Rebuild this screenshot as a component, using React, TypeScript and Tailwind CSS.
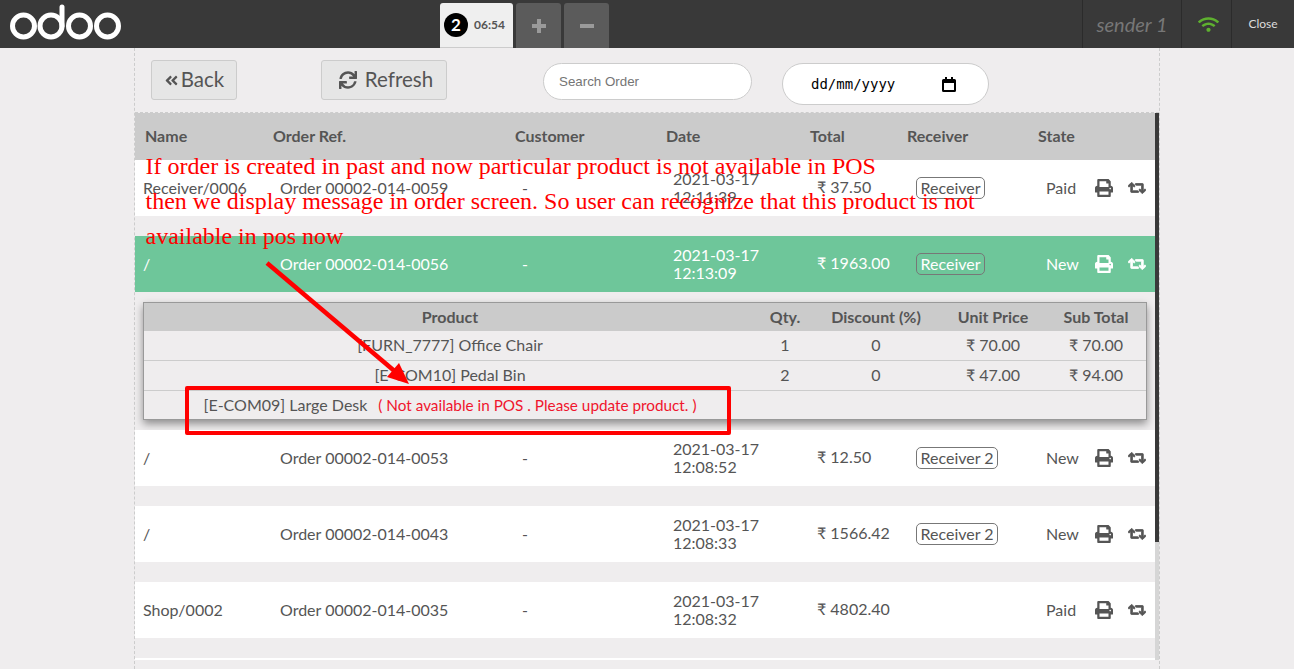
import { FaAngleDoubleLeft, FaPrint, FaRetweet, FaSync, FaWifi } from 'react-icons/fa';

type Order = {
  name: string;
  ref: string;
  date: string;
  time: string;
  total: string;
  receiver?: string;
  state: string;
  active?: boolean;
};

const orders: Order[] = [
  { name: 'Receiver/0006', ref: 'Order 00002-014-0059', date: '2021-03-17', time: '12:11:39', total: '₹ 37.50', receiver: 'Receiver', state: 'Paid' },
  { name: '/', ref: 'Order 00002-014-0056', date: '2021-03-17', time: '12:13:09', total: '₹ 1963.00', receiver: 'Receiver', state: 'New', active: true },
  { name: '/', ref: 'Order 00002-014-0053', date: '2021-03-17', time: '12:08:52', total: '₹ 12.50', receiver: 'Receiver 2', state: 'New' },
  { name: '/', ref: 'Order 00002-014-0043', date: '2021-03-17', time: '12:08:33', total: '₹ 1566.42', receiver: 'Receiver 2', state: 'New' },
  { name: 'Shop/0002', ref: 'Order 00002-014-0035', date: '2021-03-17', time: '12:08:32', total: '₹ 4802.40', state: 'Paid' },
];

const lines = [
  { product: '[FURN_7777] Office Chair', qty: '1', discount: '0', price: '₹ 70.00', sub: '₹ 70.00' },
  { product: '[E-COM10] Pedal Bin', qty: '2', discount: '0', price: '₹ 47.00', sub: '₹ 94.00' },
];

function Logo() {
  return (
    <svg width="113" height="38" viewBox="0 0 113 38" className="ml-[9px] mt-[4px] shrink-0" fill="none" stroke="#fff" strokeWidth="5">
      <circle cx="14.5" cy="22" r="11" />
      <circle cx="42" cy="22" r="11" />
      <path d="M53 22V3" strokeLinecap="round" />
      <circle cx="70.5" cy="22" r="11" />
      <circle cx="98.5" cy="22" r="11" />
    </svg>
  );
}

function Header() {
  return (
    <div className="flex h-12 bg-[#393939]">
      <Logo />
      <div className="ml-[318px] flex gap-[3px] pt-[3px]">
        <div className="flex h-[45px] w-[73px] items-center rounded-t-[3px] border-b border-[#ccc] bg-[#efefef] pl-1">
          <span className="flex h-6 w-6 items-center justify-center rounded-full bg-black text-[17px] font-bold text-white">2</span>
          <span className="ml-[6px] text-xs font-bold text-[#555]">06:54</span>
        </div>
        <div className="flex h-[45px] w-[45px] items-center justify-center rounded-t-[3px] bg-[#5b5b5b] text-[#9a9a9a]">
          <svg width="16" height="16" viewBox="0 0 16 16" fill="currentColor"><path d="M6 1h4v5h5v4h-5v5H6v-5H1V6h5z" /></svg>
        </div>
        <div className="flex h-[45px] w-[45px] items-center justify-center rounded-t-[3px] bg-[#5b5b5b] text-[#9a9a9a]">
          <svg width="16" height="16" viewBox="0 0 16 16" fill="currentColor"><path d="M1 6h14v4H1z" /></svg>
        </div>
      </div>
      <div className="ml-auto flex">
        <div className="flex w-[99px] items-center justify-center border-l border-[#2b2b2b] text-[20px] italic text-[#777]">sender 1</div>
        <div className="flex w-[50px] items-center justify-center border-l border-[#2b2b2b] pl-1">
          <FaWifi className="text-[21px] text-[#5eb02f]" />
        </div>
        <div className="flex w-[63px] items-center justify-center border-l border-[#2b2b2b] pb-[1px] text-xs text-[#ddd]">Close</div>
      </div>
    </div>
  );
}

function Toolbar() {
  return (
    <div className="flex h-16 items-start pt-3 pl-4">
      <button className="flex h-10 w-[86px] items-center justify-center gap-[2px] rounded-[3px] border border-[#ccc] bg-[#e6e6e6] pb-[2px] text-[20.5px] text-[#555]">
        <FaAngleDoubleLeft className="mt-[2px] text-[15px]" />
        Back
      </button>
      <button className="ml-[84px] flex h-10 w-[126px] items-center justify-center gap-2 rounded-[3px] border border-[#ccc] bg-[#e6e6e6] pb-[2px] pl-1 text-[20.5px] text-[#555]">
        <FaSync className="mt-[2px] text-lg" />
        Refresh
      </button>
      <input
        placeholder="Search Order"
        className="ml-24 mt-[3px] h-[37px] w-[209px] rounded-[20px] border border-[#ccc] bg-white pl-[15px] font-['Liberation_Sans',sans-serif] text-[13.33px] outline-none placeholder:text-[#757575]"
      />
      <div className="ml-[30px] mt-[3px] flex h-[42px] w-[207px] items-center rounded-[22px] border border-[#ccc] bg-white pl-7 font-['DejaVu_Sans_Mono',monospace] text-[14px] text-black">
        dd/mm/yyyy
        <svg width="14" height="15" viewBox="0 0 14 15" className="ml-[47px]">
          <path d="M3 0h2v2h4V0h2v2h1.5A1.5 1.5 0 0 1 14 3.5v10a1.5 1.5 0 0 1-1.5 1.5h-11A1.5 1.5 0 0 1 0 13.5v-10A1.5 1.5 0 0 1 1.5 2H3zM2 6v7h10V6z" fill="#000" />
        </svg>
      </div>
    </div>
  );
}

function OrderRow({ order }: { order: Order }) {
  const rowTone = order.active ? 'bg-[#6ec69a] text-white' : 'bg-white text-[#555]';
  return (
    <div className={`flex h-14 items-center pl-2 ${rowTone}`}>
      <div className="w-[137px]">{order.name}</div>
      <div className="w-[242px]">{order.ref}</div>
      <div className="w-[151px]">-</div>
      <div className="w-[144px] leading-[18px]">
        {order.date}
        <br />
        {order.time}
      </div>
      <div className="w-[99px] -translate-y-[1px]">{order.total}</div>
      <div className="w-[130px]">
        {order.receiver && (
          <span className="inline-block h-[22px] rounded-[5px] border border-[#777] px-[3.5px] leading-[20px]">{order.receiver}</span>
        )}
      </div>
      <div className="w-[49px]">{order.state}</div>
      <FaPrint className="w-[18px] text-lg" />
      <FaRetweet className="ml-[15px] text-lg" stroke="currentColor" strokeWidth="28" />
    </div>
  );
}

function OrderLines() {
  const cols = 'grid grid-cols-[612px_58px_124px_110px_96px] items-center text-center';
  return (
    <div className="h-[138px] px-2 pt-[10px]">
      <div className="h-[118px] border border-[#999] shadow-[0_4px_8px_rgba(0,0,0,0.4)]">
        <div className={`${cols} h-[28px] bg-[#cbcbcb] font-bold`}>
          <div>Product</div>
          <div>Qty.</div>
          <div>Discount (%)</div>
          <div>Unit Price</div>
          <div>Sub Total</div>
        </div>
        {lines.map((line) => (
          <div key={line.product} className={`${cols} h-[30px] border-b border-[#ccc] pb-[2px]`}>
            <div>{line.product}</div>
            <div>{line.qty}</div>
            <div>{line.discount}</div>
            <div>{line.price}</div>
            <div>{line.sub}</div>
          </div>
        ))}
        <div className={`${cols} h-[28px]`}>
          <div>
            [E-COM09] Large Desk
            <span className="ml-[7px] text-[15.3px] text-[#f0152d]"> ( Not available in POS . Please update product. )</span>
          </div>
        </div>
      </div>
    </div>
  );
}

function Annotation() {
  return (
    <>
      <div className="absolute left-[145.5px] top-[149px] w-[860px] font-['Liberation_Serif',serif] text-2xl leading-[35px] text-[#ff0000]">
        If order is created in past and now particular product is not available in POS
        <br />
        then we display message in order screen. So user can recognize that this product is not
        <br />
        available in pos now
      </div>
      <svg className="absolute left-0 top-0" width="1294" height="669" fill="#ff0000">
        <path d="M267 263L398 374" stroke="#ff0000" strokeWidth="4.5" />
        <path d="M409 384L399 363L387 377z" />
      </svg>
      <div className="absolute left-[185px] top-[386px] h-[49px] w-[546px] rounded-[2px] border-4 border-[#ff0000]" />
    </>
  );
}

export default function App() {
  return (
    <div className="relative h-[669px] w-[1294px] overflow-hidden bg-[#efedee] font-['Lato',sans-serif] text-base text-[#555]">
      <Header />
      <div className="ml-[134px] h-[621px] w-[1026px] border-x border-dashed border-[#ccc]">
        <Toolbar />
        <div className="flex border-t border-dashed border-[#ccc]">
          <div className="w-[1020px] shrink-0">
            <div className="flex h-[47px] items-center bg-[#cbcbcb] pb-[2px] pl-[10px] font-bold">
              <div className="w-[128px]">Name</div>
              <div className="w-[242px]">Order Ref.</div>
              <div className="w-[151px]">Customer</div>
              <div className="w-[144px]">Date</div>
              <div className="w-[97px]">Total</div>
              <div className="w-[131px]">Receiver</div>
              <div>State</div>
            </div>
            <div className="flex flex-col">
              <OrderRow order={orders[0]} />
              <div className="mt-5">
                <OrderRow order={orders[1]} />
              </div>
              <OrderLines />
              <OrderRow order={orders[2]} />
              <div className="mt-5">
                <OrderRow order={orders[3]} />
              </div>
              <div className="mt-5">
                <OrderRow order={orders[4]} />
              </div>
              <div className="mt-5 h-[2px] bg-white" />
            </div>
          </div>
          <div className="h-[547px] w-[4px] shrink-0 bg-[#d6d6d6]">
            <div className="h-[429px] bg-[#393939]" />
          </div>
        </div>
      </div>
      <Annotation />
    </div>
  );
}
